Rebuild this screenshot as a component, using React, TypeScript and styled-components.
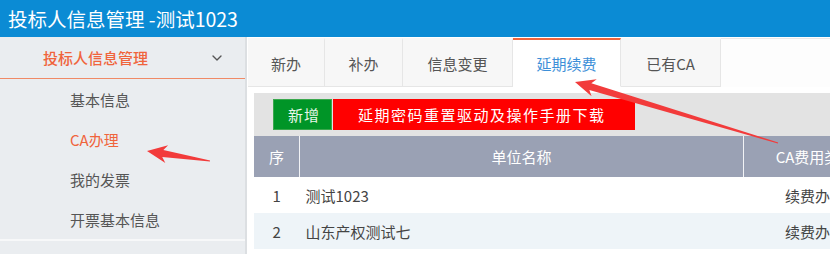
import styled, { createGlobalStyle } from 'styled-components'
import { ChevronDown } from 'lucide-react'

const GlobalStyle = createGlobalStyle`
  body {
    margin: 0;
    font-family: "Microsoft YaHei", "Noto Sans CJK SC", "Noto Sans", sans-serif;
    overflow: hidden;
  }
`

const Page = styled.div`
  position: relative;
  width: 830px;
  height: 254px;
  overflow: hidden;
  background: #fff;
`

const TopBar = styled.div`
  height: 37px;
  display: flex;
  align-items: center;
  padding-left: 8px;
  background: #0b8bd4;
  color: #fff;
  font-size: 19.5px;
  white-space: nowrap;
`

const Body = styled.div`
  display: flex;
  height: 217px;
`

const Sidebar = styled.div`
  width: 245px;
  flex-shrink: 0;
  background: #eaedf0;
  border-right: 2px solid #dcdfe2;
`

const GroupHead = styled.div`
  height: 41px;
  display: flex;
  align-items: center;
  padding-left: 43px;
  padding-right: 20px;
  border-bottom: 1px solid #f08a66;
  color: #f0643c;
  font-size: 15px;
  font-weight: 500;

  svg {
    margin-left: auto;
    color: #555;
  }
`

const MenuList = styled.div`
  border-bottom: 2px solid #f7f8f9;
`

const MenuItem = styled.div<{ $active?: boolean }>`
  height: 40px;
  display: flex;
  align-items: center;
  padding-left: 70px;
  font-size: 15px;
  color: ${({ $active }) => ($active ? '#f0643c' : '#555')};
`

const Main = styled.div`
  flex: 1;
  min-width: 0;
  padding-left: 1px;
  background: #fff;
`

const TabBar = styled.div`
  display: flex;
  height: 48px;
  margin-top: 1px;
  border-top: 1px solid #e8e8e8;
  background: #fdfdfd;
`

const Tab = styled.div<{ $active?: boolean; $w: number }>`
  width: ${({ $w }) => $w}px;
  display: flex;
  align-items: center;
  justify-content: center;
  font-size: 15px;
  border-right: 1px solid #e6e6e6;
  margin-top: -1px;
  border-top: 2px solid ${({ $active }) => ($active ? '#f0643c' : 'transparent')};
  border-bottom: 1px solid ${({ $active }) => ($active ? '#fff' : '#e6e6e6')};
  background: ${({ $active }) => ($active ? '#fff' : '#f7f7f7')};
  color: ${({ $active }) => ($active ? '#3d8fd8' : '#555')};
`

const Toolbar = styled.div`
  display: flex;
  height: 43px;
  margin: 6px 0 0 6px;
  padding: 6px 0 0 19px;
  box-sizing: border-box;
  background: #e3e3e3;
  width: 700px;
`

const ActionButton = styled.div<{ $color: string }>`
  height: 31px;
  display: flex;
  align-items: center;
  box-sizing: border-box;
  padding: 0 26px;
  font-size: 15px;
  letter-spacing: 1.5px;
  color: #fff;
  background: ${({ $color }) => $color};
`

const AddButton = styled(ActionButton)`
  width: 59px;
  padding: 0 0 0 14px;
  letter-spacing: 1px;
  border: 1px solid #3aa84d;
  color: #e9f7ea;
`

const DownloadButton = styled(ActionButton)`
  width: 302px;
  margin-left: 1px;
  padding-left: 25px;
`

const Table = styled.table`
  margin-left: 6px;
  border-collapse: collapse;
  table-layout: fixed;
  width: 700px;
  font-size: 15px;
`

const HeadCell = styled.th<{ $w: number }>`
  width: ${({ $w }) => $w}px;
  height: 41px;
  padding: 0;
  background: #9aa1b4;
  color: #fff;
  font-weight: 400;
  border-left: 1px solid #f2f3f6;
  white-space: nowrap;

  &:first-child {
    border-left: none;
  }
`

const Row = styled.tr<{ $alt?: boolean }>`
  height: 36px;
  background: ${({ $alt }) => ($alt ? '#eef4f8' : '#fff')};
`

const Cell = styled.td<{ $align?: string }>`
  padding: 0 0 0 ${({ $align }) => ($align === 'left' ? '6px' : '0')};
  text-align: ${({ $align }) => $align || 'center'};
  color: #444;
  white-space: nowrap;
`

const Overlay = styled.svg`
  position: absolute;
  left: 0;
  top: 0;
  pointer-events: none;
`

const rows = [
  { no: 1, name: '测试1023', type: '续费办理' },
  { no: 2, name: '山东产权测试七', type: '续费办理' },
]

const tabs = [
  { label: '新办', w: 76 },
  { label: '补办', w: 77 },
  { label: '信息变更', w: 109 },
  { label: '延期续费', w: 107 },
  { label: '已有CA', w: 99 },
]
const menu = ['基本信息', 'CA办理', '我的发票', '开票基本信息']

// annotation arrow: tip, tail, head length, head half width
function arrowPoints(tx: number, ty: number, ex: number, ey: number, hl = 20, hw = 9, nw = 3.5) {
  const dx = ex - tx
  const dy = ey - ty
  const len = Math.hypot(dx, dy)
  const ux = dx / len
  const uy = dy / len
  const nx = -uy
  const ny = ux
  const bx = tx + ux * hl
  const by = ty + uy * hl
  const kx = tx + ux * (hl - 4)
  const ky = ty + uy * (hl - 4)
  const pts = [
    [tx, ty],
    [bx + nx * hw, by + ny * hw],
    [kx + nx * nw, ky + ny * nw],
    [ex + nx * 0.6, ey + ny * 0.6],
    [ex - nx * 0.6, ey - ny * 0.6],
    [kx - nx * nw, ky - ny * nw],
    [bx - nx * hw, by - ny * hw],
  ]
  return pts.map((p) => p.join(',')).join(' ')
}

export default function App() {
  return (
    <Page>
      <GlobalStyle />
      <TopBar>投标人信息管理 -测试1023</TopBar>
      <Body>
        <Sidebar>
          <GroupHead>
            投标人信息管理
            <ChevronDown size={16} strokeWidth={2} />
          </GroupHead>
          <MenuList>
            {menu.map((m) => (
              <MenuItem key={m} $active={m === 'CA办理'}>
                {m}
              </MenuItem>
            ))}
          </MenuList>
        </Sidebar>
        <Main>
          <TabBar>
            {tabs.map((t) => (
              <Tab key={t.label} $w={t.w} $active={t.label === '延期续费'}>
                {t.label}
              </Tab>
            ))}
          </TabBar>
          <Toolbar>
            <AddButton $color="#009527">新增</AddButton>
            <DownloadButton $color="#ff0000">延期密码重置驱动及操作手册下载</DownloadButton>
          </Toolbar>
          <Table>
            <thead>
              <tr>
                <HeadCell $w={45}>序</HeadCell>
                <HeadCell $w={443}>单位名称</HeadCell>
                <HeadCell $w={142}>CA费用类型</HeadCell>
                <HeadCell $w={100}>操作</HeadCell>
              </tr>
            </thead>
            <tbody>
              {rows.map((r, i) => (
                <Row key={r.no} $alt={i % 2 === 1}>
                  <Cell>{r.no}</Cell>
                  <Cell $align="left">{r.name}</Cell>
                  <Cell>{r.type}</Cell>
                  <Cell />
                </Row>
              ))}
            </tbody>
          </Table>
        </Main>
      </Body>
      <Overlay width={830} height={254}>
        <polygon points={arrowPoints(147, 151, 210, 161)} fill="#f23b3b" />
        <polygon points={arrowPoints(575, 82, 778, 143)} fill="#f23b3b" />
      </Overlay>
    </Page>
  )
}
